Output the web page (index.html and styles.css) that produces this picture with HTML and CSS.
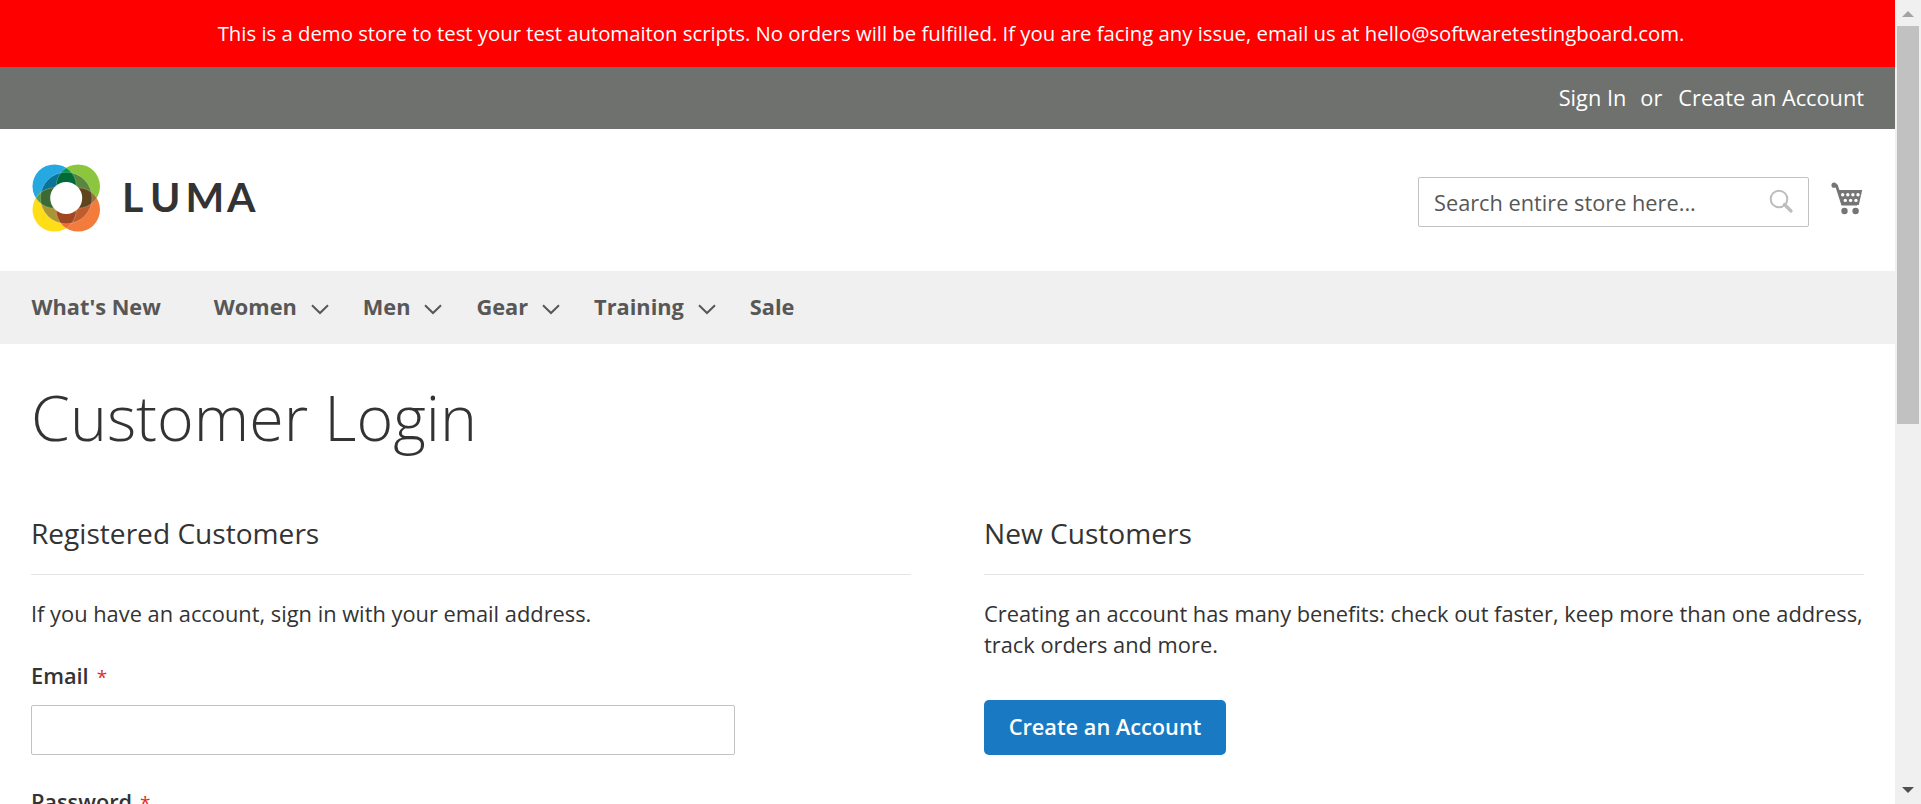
FILE: index.html
```html
<!DOCTYPE html>
<html lang="en">
<head>
<meta charset="utf-8">
<title>Customer Login</title>
<link rel="stylesheet" href="styles.css">
</head>
<body>
<div class="window">
  <div class="page">
    <div class="notice"><span>This is a demo store to test your test automaiton scripts. No orders will be fulfilled. If you are facing any issue, email us at hello@softwaretestingboard.com.</span></div>
    <div class="panel">
      <a class="signin">Sign In</a><span class="or">or</span><a class="create">Create an Account</a>
    </div>
    <header class="header">
      <svg class="logo" width="230" height="70" viewBox="0 0 230 70">
        <defs>
          <clipPath id="c"><circle cx="23" cy="23.3" r="21.9"/></clipPath>
          <clipPath id="g"><circle cx="46.7" cy="23.3" r="21.9"/></clipPath>
          <clipPath id="y"><circle cx="23" cy="46.7" r="21.9"/></clipPath>
          <clipPath id="o"><circle cx="46.7" cy="46.7" r="21.9"/></clipPath>
        </defs>
        <g transform="translate(.4 0)">
        <circle cx="23" cy="23.3" r="21.9" fill="#26a9e0"/>
        <circle cx="46.7" cy="23.3" r="21.9" fill="#8cc63f"/>
        <circle cx="23" cy="46.7" r="21.9" fill="#ffde17"/>
        <circle cx="46.7" cy="46.7" r="21.9" fill="#f37b3c"/>
        <circle cx="34.8" cy="35" r="25.8" fill="#0a739b" clip-path="url(#c)"/>
        <circle cx="34.8" cy="35" r="25.8" fill="#58883f" clip-path="url(#g)"/>
        <circle cx="34.8" cy="35" r="25.8" fill="#a89535" clip-path="url(#y)"/>
        <circle cx="34.8" cy="35" r="25.8" fill="#bf5c2d" clip-path="url(#o)"/>
        <g clip-path="url(#c)"><circle cx="46.7" cy="23.3" r="21.9" fill="#009648"/><circle cx="23" cy="46.7" r="21.9" fill="#5b9846"/></g>
        <g clip-path="url(#o)"><circle cx="46.7" cy="23.3" r="21.9" fill="#94703a"/><circle cx="23" cy="46.7" r="21.9" fill="#f06a2c"/></g>
        <g clip-path="url(#c)"><circle cx="34.8" cy="35" r="25.8" fill="#006b38" clip-path="url(#g)"/><circle cx="34.8" cy="35" r="25.8" fill="#3c6a33" clip-path="url(#y)"/></g>
        <g clip-path="url(#o)"><circle cx="34.8" cy="35" r="25.8" fill="#60441f" clip-path="url(#g)"/><circle cx="34.8" cy="35" r="25.8" fill="#a14823" clip-path="url(#y)"/></g>
        <g class="outline">
          <circle cx="34.8" cy="35" r="25.8"/>
          <circle cx="46.7" cy="23.3" r="21.9" clip-path="url(#c)"/><circle cx="23" cy="23.3" r="21.9" clip-path="url(#g)"/>
          <circle cx="23" cy="46.7" r="21.9" clip-path="url(#c)"/><circle cx="23" cy="23.3" r="21.9" clip-path="url(#y)"/>
          <circle cx="46.7" cy="23.3" r="21.9" clip-path="url(#o)"/><circle cx="46.7" cy="46.7" r="21.9" clip-path="url(#g)"/>
          <circle cx="23" cy="46.7" r="21.9" clip-path="url(#o)"/><circle cx="46.7" cy="46.7" r="21.9" clip-path="url(#y)"/>
        </g>
        <circle cx="34.8" cy="35" r="16" fill="#fff"/>
        </g>
        <text class="brand" x="91 119 154.5 196" y="48.5">LUMA</text>
      </svg>
      <div class="tools">
        <div class="search">
          <span>Search entire store here...</span>
          <svg width="26" height="26" viewBox="0 0 26 26" fill="none" stroke="#bdbdbd"><circle cx="11" cy="11" r="8.3" stroke-width="2"/><path d="M16.5 16.5L23 23" stroke-width="3.2" stroke-linecap="round"/></svg>
        </div>
        <svg class="cart" width="32" height="34" viewBox="0 0 32 34">
          <path d="M3 3L5.5 3.6L11.5 22H26" fill="none" stroke="#757575" stroke-width="2.8"/>
          <circle cx="3.1" cy="3.2" r="2.6" fill="#757575"/>
          <path d="M7.5 8H31.2L27.8 23H12.2Z" fill="#757575"/>
          <g fill="#fff"><circle cx="11.7" cy="12.8" r="1.7"/><circle cx="16.8" cy="12.8" r="1.7"/><circle cx="21.9" cy="12.8" r="1.7"/><circle cx="27" cy="12.8" r="1.7"/><circle cx="14.3" cy="18.4" r="1.7"/><circle cx="19.6" cy="18.4" r="1.7"/><circle cx="24.9" cy="18.4" r="1.7"/></g>
          <circle cx="13.5" cy="29" r="3.2" fill="#757575"/><circle cx="24.6" cy="29" r="3.2" fill="#757575"/>
        </svg>
      </div>
    </header>
    <nav class="nav">
      <a class="new">What's New</a>
      <a>Women<svg class="chev" viewBox="0 0 18 11"><path d="M1 1.2L9 9L17 1.2"/></svg></a>
      <a>Men<svg class="chev" viewBox="0 0 18 11"><path d="M1 1.2L9 9L17 1.2"/></svg></a>
      <a>Gear<svg class="chev" viewBox="0 0 18 11"><path d="M1 1.2L9 9L17 1.2"/></svg></a>
      <a>Training<svg class="chev" viewBox="0 0 18 11"><path d="M1 1.2L9 9L17 1.2"/></svg></a>
      <a>Sale</a>
    </nav>
    <main class="main">
      <h1>Customer Login</h1>
      <div class="columns">
        <section>
          <h2>Registered Customers</h2>
          <p>If you have an account, sign in with your email address.</p>
          <label class="label">Email<span class="star">*</span></label>
          <input class="input" type="email">
          <label class="label">Password<span class="star">*</span></label>
          <input class="input" type="password">
        </section>
        <section>
          <h2>New Customers</h2>
          <p>Creating an account has many benefits: check out faster, keep more than one address,<br>track orders and more.</p>
          <button class="button">Create an Account</button>
        </section>
      </div>
    </main>
  </div>
  <div class="scrollbar">
    <svg width="12" height="6" viewBox="0 0 12 6"><path d="M0 6L6 0L12 6Z" fill="#a3a3a3"/></svg>
    <div class="thumb"></div>
    <svg class="down" width="12" height="6" viewBox="0 0 12 6"><path d="M0 0H12L6 6Z" fill="#505050"/></svg>
  </div>
</div>
</body>
</html>
```
FILE: styles.css
```css
* { box-sizing: border-box; }
body { margin: 0; background: #fff; color: #333; font: 400 21.75px/31px "Open Sans", "Noto Sans", sans-serif; }
.window { display: flex; height: 804px; overflow: hidden; }
.page { width: 1895px; height: 804px; overflow: hidden; white-space: nowrap; }
.notice { height: 67px; background: #f00; color: #fff; display: flex; align-items: center; justify-content: center; font-size: 20.32px; }
.notice span { margin-left: 7px; }
.panel { height: 62px; background: #6e716e; color: #fff; display: flex; align-items: center; justify-content: flex-end; padding: 0 31px 2px 0; }
.or { margin: 0 16px 0 14px; }
.header { height: 142px; padding: 34px 32px 0 31px; display: flex; justify-content: space-between; }
.outline { fill: none; stroke: #fff; stroke-opacity: .3; stroke-width: .7; }
.brand { font: 700 41px "Lato", sans-serif; fill: #333; }
.tools { display: flex; }
.search { width: 391px; height: 50px; margin-top: 14px; border: 1px solid #c2c2c2; border-radius: 2px; display: flex; align-items: center; justify-content: space-between; padding: 0 14px 0 15px; color: #575757; }
.search svg { margin-top: -3px; }
.cart { margin: 19px 0 0 22px; }
.nav { height: 73px; background: #f0f0f0; display: flex; align-items: center; padding: 0 0 2px 31.5px; font-weight: 700; color: #575757; }
.nav a { display: flex; align-items: center; margin-right: 34px; }
.nav .new { margin-right: 53px; }
.chev { width: 18px; height: 11px; margin: 5px 0 0 14px; fill: none; stroke: #575757; stroke-width: 2; }
.main { padding: 0 31px; }
h1 { margin: 38px 0 0; font-size: 62.7px; line-height: 69px; font-weight: 300; }
.columns { display: grid; grid-template-columns: 880px 880px; column-gap: 73px; margin-top: 63px; }
h2 { margin: 0; height: 61px; border-bottom: 1px solid #e5e5e5; font-size: 28.1px; line-height: 39px; font-weight: 400; }
p { margin: 23px 0 0; font-size: 21.83px; font-weight: 400; }
.label { display: block; height: 31px; margin-top: 31px; font-weight: 600; }
.star { color: #e02b27; font-size: 19px; line-height: 0; font-weight: 400; margin-left: 8px; }
.input { display: block; width: 704px; height: 50px; margin-top: 14px; border: 1px solid #c2c2c2; border-radius: 2px; background: #fff; }
.button { margin-top: 40px; width: 242px; height: 55px; border: 0; border-radius: 5px; background: #1979c3; color: #fff; font: 600 21.75px/25px "Open Sans", sans-serif; padding: 0 0 2px; }
.scrollbar { width: 26px; background: #f0f0f0; display: flex; flex-direction: column; align-items: center; padding: 11px 0; }
.thumb { width: 22px; height: 398px; margin-top: 9px; background: #c1c1c1; }
.down { margin-top: auto; }
```
